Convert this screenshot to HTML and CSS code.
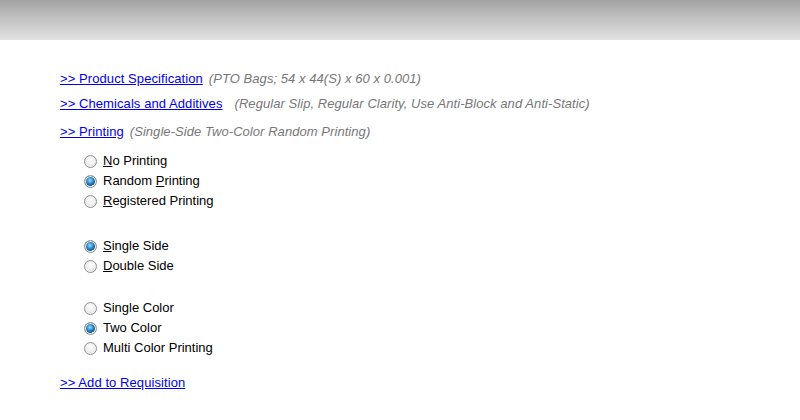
FILE: index.html
```html
<!DOCTYPE html>
<html>
<head>
<meta charset="utf-8">
<link rel="stylesheet" href="styles.css">
</head>
<body>
<div class="header"></div>
<div class="content">
  <div class="row r-spec"><a href="#">&gt;&gt; Product Specification</a><span class="note">(PTO Bags; 54 x 44(S) x 60 x 0.001)</span></div>
  <div class="row r-chem"><a href="#">&gt;&gt; Chemicals and Additives</a><span class="note wide">(Regular Slip, Regular Clarity, Use Anti-Block and Anti-Static)</span></div>
  <div class="row r-print"><a href="#">&gt;&gt; Printing</a><span class="note">(Single-Side Two-Color Random Printing)</span></div>

  <div class="group g1">
    <label class="opt"><input type="radio" name="ptype"><span><u>N</u>o Printing</span></label>
    <label class="opt"><input type="radio" name="ptype" checked><span>Random <u>P</u>rinting</span></label>
    <label class="opt"><input type="radio" name="ptype"><span><u>R</u>egistered Printing</span></label>
  </div>

  <div class="group g2">
    <label class="opt"><input type="radio" name="side" checked><span><u>S</u>ingle Side</span></label>
    <label class="opt"><input type="radio" name="side"><span><u>D</u>ouble Side</span></label>
  </div>

  <div class="group g3">
    <label class="opt"><input type="radio" name="color"><span>Single Color</span></label>
    <label class="opt"><input type="radio" name="color" checked><span>Two Color</span></label>
    <label class="opt"><input type="radio" name="color"><span>Multi Color Printing</span></label>
  </div>

  <div class="row r-add"><a href="#">&gt;&gt; Add to Requisition</a></div>
</div>
</body>
</html>
```

FILE: styles.css
```css
html, body {
  margin: 0;
  padding: 0;
  background: #fff;
}
body {
  font-family: "Liberation Sans", Arial, sans-serif;
  font-size: 13px;
  color: #000;
}
.header {
  height: 40px;
  background: linear-gradient(to bottom, #a2a2a2 0%, #c4c4c4 50%, #e2e2e2 100%);
}
.content {
  padding: 29px 0 0 60px;
}
.row {
  height: 20px;
  line-height: 20px;
  white-space: nowrap;
}
.row a {
  color: #0000ee;
  text-decoration: underline;
  letter-spacing: 0.08px;
}
.note {
  color: #777;
  font-style: italic;
  margin-left: 6px;
  letter-spacing: 0.06px;
}
.note.wide {
  margin-left: 12px;
}
.r-chem { margin-top: 5px; }
.r-print { margin-top: 8px; }
.g1 { margin-top: 9px; }
.g2 { margin-top: 25px; }
.g3 { margin-top: 22px; }
.r-add { margin-top: 15px; }

.group {
  display: flex;
  flex-direction: column;
}
.opt {
  display: flex;
  align-items: center;
  height: 20px;
  line-height: 20px;
  padding-left: 24px;
}
.opt u {
  text-decoration: underline;
}
.opt input {
  -webkit-appearance: none;
  appearance: none;
  margin: 0 6px 0 0;
  width: 13px;
  height: 13px;
  border-radius: 50%;
  border: 1px solid #8e8f8f;
  box-sizing: border-box;
  background: radial-gradient(circle at 50% 40%, #ffffff 0%, #f0f0f0 45%, #d4d4d4 100%);
  box-shadow: inset 0 0 0 1px #f4f4f4;
}
.opt input:checked {
  background:
    radial-gradient(circle at 45% 40%, #a8dcf8 0%, #2b8ad0 35%, #12528a 62%, transparent 64%),
    radial-gradient(circle at 50% 40%, #ffffff 0%, #f0f0f0 45%, #d4d4d4 100%);
}
```
